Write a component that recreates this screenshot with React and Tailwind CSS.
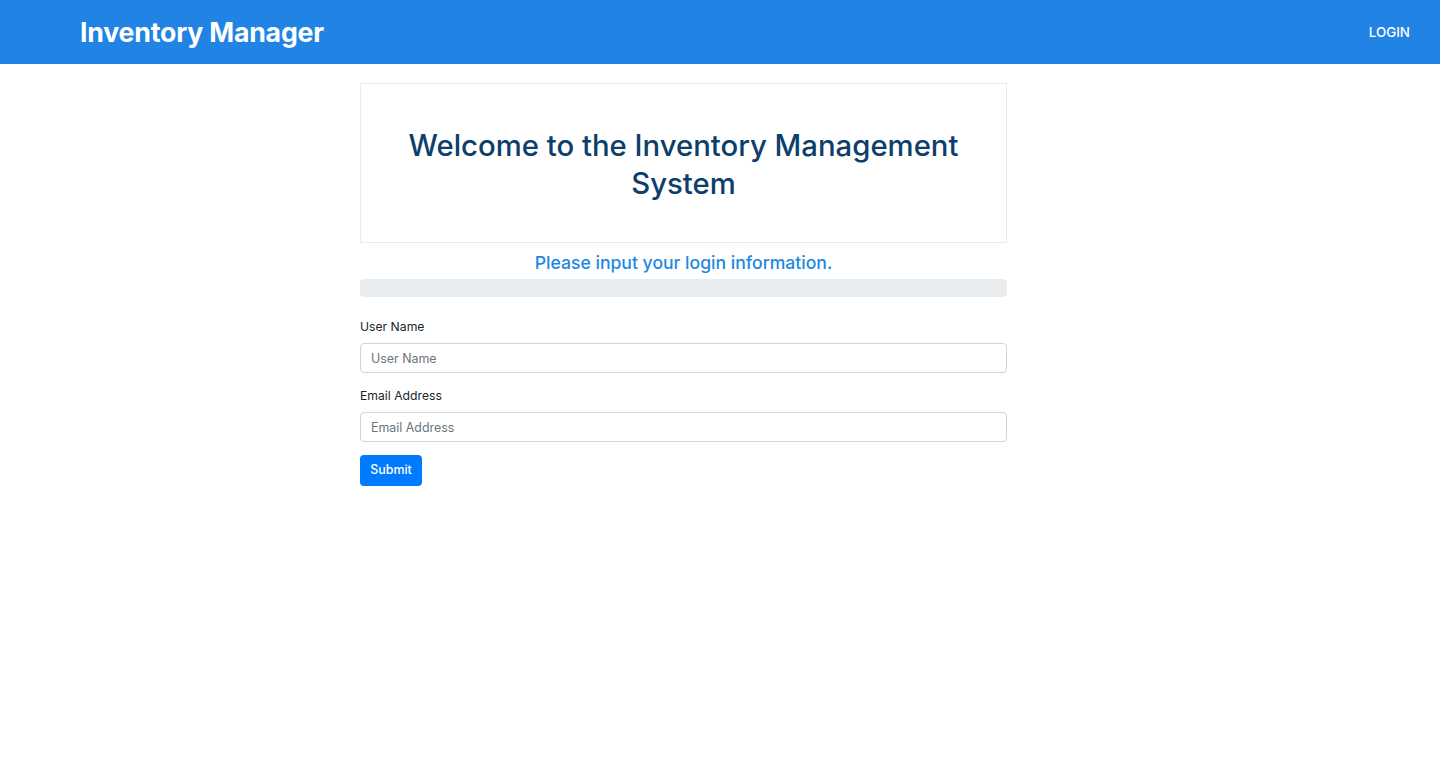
import React from "react";

export default function App() {
    return (
        <div className="min-h-screen bg-white font-['Inter',sans-serif]">
            <header className="flex h-16 items-center justify-between bg-[#2184e5] pl-20 pr-[30px]">
                <h1 className="text-[26.7px] font-bold tracking-[-0.2px] text-white">Inventory Manager</h1>
                <a href="#" className="text-[13.4px] font-medium text-white">LOGIN</a>
            </header>

            <main className="ml-[360px] w-[647px] pt-[19px]">
                <div className="border border-[#e9ecef] px-8 pb-[39px] pt-[43px] text-center">
                    <h2 className="text-[29.3px] font-medium leading-[38px] text-[#0d3e6c]">
                        Welcome to the Inventory Management System
                    </h2>
                </div>

                <p className="mt-[8px] text-center text-[17.6px] font-medium leading-[24px] text-[#1e88e5]">
                    Please input your login information.
                </p>
                <div className="mt-[4px] h-[18px] rounded bg-[#e9ecef]" />

                <form className="mt-[21px] text-[12.2px] text-[#212529]" onSubmit={(e) => e.preventDefault()}>
                    <label className="block leading-[17px]">User Name</label>
                    <input
                        placeholder="User Name"
                        className="mt-[8px] block h-[30px] w-full rounded border border-[#ced4da] px-[10px] text-[12.4px] placeholder:text-[#6c757d] outline-none"
                    />
                    <label className="mt-[14px] block leading-[17px]">Email Address</label>
                    <input
                        placeholder="Email Address"
                        className="mt-[8px] block h-[30px] w-full rounded border border-[#ced4da] px-[10px] text-[12.4px] placeholder:text-[#6c757d] outline-none"
                    />
                    <button className="mt-[13px] h-[31px] w-[62px] rounded bg-[#007bff] text-[12.4px] font-medium text-white">
                        Submit
                    </button>
                </form>
            </main>
        </div>
    );
}
